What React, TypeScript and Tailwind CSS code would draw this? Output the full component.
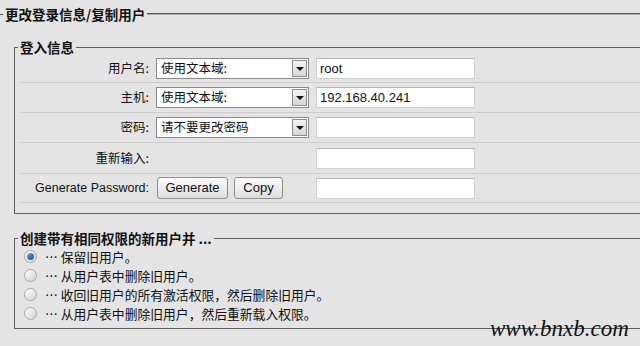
// Change login info / copy user form (phpMyAdmin style)
import React from 'react';

const cjk = "font-['Noto_Sans_CJK_SC','Noto_Sans',sans-serif]";
const latin = "font-['Liberation_Sans',Arial,sans-serif]";

const Select: React.FC<{ value: string }> = ({ value }) => (
  <div className="relative w-[153px] h-[21px] bg-white border border-[#8a8a8a] flex items-center">
    <span className={`${cjk} text-[12.5px] leading-none text-[#111] pl-[4px]`}>{value}</span>
    <div className="absolute right-[1px] top-[1px] w-[15px] h-[17px] border border-[#8d8d8d] bg-gradient-to-b from-[#f4f4f4] to-[#d6d6d6] flex items-center justify-center">
      <div className="w-0 h-0 border-l-[4px] border-r-[4px] border-t-[4px] border-l-transparent border-r-transparent border-t-[#111]" />
    </div>
  </div>
);

const TextInput: React.FC<{ value?: string }> = ({ value }) => (
  <div className="w-[159px] h-[21px] bg-white border border-[#d0d0d0] border-t-[#b8b8b8] flex items-center">
    <span className={`${latin} text-[13px] text-[#111] pl-[3px]`}>{value}</span>
  </div>
);

const Button: React.FC<{ label: string; w: string }> = ({ label, w }) => (
  <div
    className={`${w} h-[22px] rounded-[3px] border border-[#8f8f8f] bg-gradient-to-b from-[#fbfbfb] to-[#dedede] flex items-center justify-center ${latin} text-[13px] text-[#111]`}
  >
    {label}
  </div>
);

const Label: React.FC<{ children: React.ReactNode; latinText?: boolean }> = ({ children, latinText }) => (
  <div className={`w-[129px] text-right ${latinText ? latin + ' text-[12.5px]' : cjk + ' text-[12.5px]'} text-[#111]`}>{children}</div>
);

const Radio: React.FC<{ checked?: boolean; label: string }> = ({ checked, label }) => (
  <div className="h-[19px] flex items-center">
    <div className="w-[13px] h-[13px] ml-[9px] rounded-full border border-[#a8a8a8] bg-gradient-to-br from-[#ffffff] to-[#d2d2d2] flex items-center justify-center">
      {checked && <div className="w-[7px] h-[7px] rounded-full bg-gradient-to-br from-[#7fa8cc] to-[#1f4d78]" />}
    </div>
    <span className={`${cjk} text-[12.8px] text-[#111] ml-[8px]`}>{label}</span>
  </div>
);

export default function App() {
  return (
    <div className="relative w-[640px] h-[346px] bg-[#e4e4e4] overflow-hidden pt-[5px]">
      <div className="flex items-center h-[18px]">
        <div className="w-[3px] h-px bg-[#555]" />
        <span className={`${cjk} text-[13.5px] font-bold text-[#111] px-[2px]`}>更改登录信息/复制用户</span>
        <div className="flex-1 border-t border-[#555] border-b-[#aaa] border-b h-[2px]" />
      </div>

      <fieldset className="ml-[14px] mt-[17px] border border-r-0 border-[#606060] pb-[10px]">
        <legend className={`ml-[3px] px-[2px] ${cjk} text-[13.5px] font-bold text-[#111] leading-[15px]`}>登入信息</legend>
        <div className="ml-[5px]">
          <div className="h-[28px] flex items-center border-b border-[#cdcdcd]">
            <Label>用户名:</Label>
            <div className="ml-[7px]"><Select value="使用文本域:" /></div>
            <div className="ml-[7px]"><TextInput value="root" /></div>
          </div>
          <div className="h-[30px] flex items-center border-b border-[#cdcdcd]">
            <Label>主机:</Label>
            <div className="ml-[7px]"><Select value="使用文本域:" /></div>
            <div className="ml-[7px]"><TextInput value="192.168.40.241" /></div>
          </div>
          <div className="h-[30px] flex items-center border-b border-[#cdcdcd]">
            <Label>密码:</Label>
            <div className="ml-[7px]"><Select value="请不要更改密码" /></div>
            <div className="ml-[7px]"><TextInput /></div>
          </div>
          <div className="h-[31px] flex items-center border-b border-[#cdcdcd]">
            <Label>重新输入:</Label>
            <div className="ml-[167px]"><TextInput /></div>
          </div>
          <div className="h-[29px] flex items-center border-b border-[#cdcdcd]">
            <Label latinText>Generate Password:</Label>
            <div className="ml-[8px] flex gap-[6px]">
              <Button label="Generate" w="w-[71px]" />
              <Button label="Copy" w="w-[49px]" />
            </div>
            <div className="ml-[33px]"><TextInput /></div>
          </div>
        </div>
      </fieldset>

      <fieldset className="ml-[14px] mt-[17px] border border-r-0 border-[#606060] pt-[1px] pb-[5px]">
        <legend className={`ml-[3px] px-[2px] ${cjk} text-[13.5px] font-bold text-[#111] leading-[15px]`}>创建带有相同权限的新用户并 ...</legend>
        <Radio checked label="… 保留旧用户。" />
        <Radio label="… 从用户表中删除旧用户。" />
        <Radio label="… 收回旧用户的所有激活权限，然后删除旧用户。" />
        <Radio label="… 从用户表中删除旧用户，然后重新载入权限。" />
      </fieldset>

      <div className="absolute left-[490px] top-[317px] font-['Liberation_Serif',serif] italic text-[23px] leading-none text-[#111]">
        www.bnxb.com
      </div>
    </div>
  );
}
